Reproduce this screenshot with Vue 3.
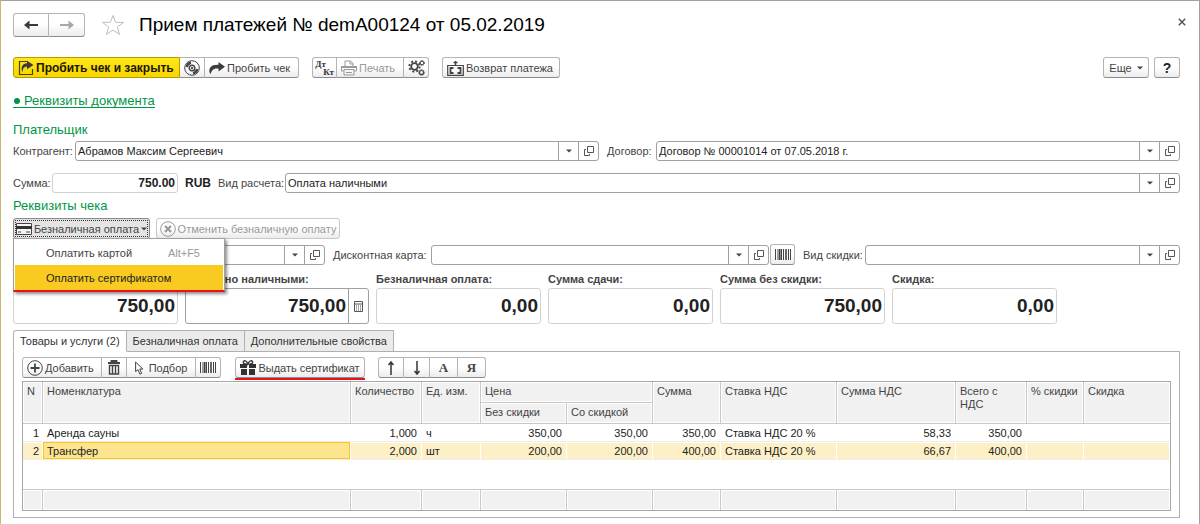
<script setup>
import { ref } from 'vue'

const contractor = ref('Абрамов Максим Сергеевич')
const contract = ref('Договор № 00001014 от 07.05.2018 г.')
const amount = ref('750.00')
const kind = ref('Оплата наличными')
const receipt = ref('')
const discountCard = ref('')
const discountKind = ref('')

const totals = [
  { id: 'due', label: '', hint: 'К оплате', value: '750,00' },
  { id: 'cash', label: 'Получено наличными:', value: '750,00', calc: true },
  { id: 'card', label: 'Безналичная оплата:', value: '0,00' },
  { id: 'change', label: 'Сумма сдачи:', value: '0,00' },
  { id: 'gross', label: 'Сумма без скидки:', value: '750,00' },
  { id: 'discount', label: 'Скидка:', value: '0,00' }
]

const rows = [
  { n: 1, name: 'Аренда сауны', qty: '1,000', unit: 'ч', price: '350,00', net: '350,00', sum: '350,00', rate: 'Ставка НДС 20 %', vat: '58,33', total: '350,00' },
  { n: 2, name: 'Трансфер', qty: '2,000', unit: 'шт', price: '200,00', net: '200,00', sum: '400,00', rate: 'Ставка НДС 20 %', vat: '66,67', total: '400,00' }
]
const selected = ref(2)
</script>

<template>
  <main class="window">
    <svg class="defs" width="0" height="0" aria-hidden="true">
      <symbol id="i-down" viewBox="0 0 6 4"><path d="M0 .5h6L3 3.5z" fill="#444" /></symbol>
      <symbol id="i-open" viewBox="0 0 10 10"><path d="M3.500 .5h6v6h-6zM2 3.500H.5v6h5V8" fill="none" stroke="#555" /></symbol>
      <symbol id="i-bars" viewBox="0 0 16 11"><path d="M.5 0v11M3 0v11M6.500 0v11M8.500 0v11M13.500 0v11M15.500 0v11" stroke="#444" /><path d="M4.800 0v11M11 0v11" stroke="#444" stroke-width="1.600" /></symbol>
      <symbol id="i-share" viewBox="0 0 16 12"><path d="M9.500 0 16 4.700 9.500 9.400V6.600C5 6.300 2.800 7.500 1.800 12 .2 11 0 8.500.7 6.500 2 3.300 5 2.600 9.500 2.700z" fill="#3c3c3c" /></symbol>
    </svg>

    <header class="head">
      <div class="group nav">
        <button class="btn" aria-label="Назад"><svg width="14" height="10" viewBox="0 0 14 10"><path d="M0 5 5.500 .5V4H14v2H5.500v3.500z" fill="#3a3a3a" /></svg></button>
        <button class="btn" aria-label="Вперед" disabled><svg width="14" height="10" viewBox="0 0 14 10"><path d="M14 5 8.500 .5V4H0v2h8.500v3.500z" fill="#a8a8a8" /></svg></button>
      </div>
      <button class="plain star" aria-label="В избранное">
        <svg width="24" height="22" viewBox="0 0 24 22"><path d="M12 1.500 14.600 8.300 22.500 8.400 16.300 13 18.600 20.500 12 16 5.400 20.500 7.700 13 1.500 8.400 9.400 8.300z" fill="none" stroke="#b9bfc8" /></svg>
      </button>
      <h1>Прием платежей № demA00124 от 05.02.2019</h1>
      <button class="plain close" aria-label="Закрыть"><svg width="8" height="8" viewBox="0 0 8 8"><path d="M.8.8l6.400 6.400M7.200.8.8 7.200" stroke="#555" stroke-width="1.500" /></svg></button>
    </header>

    <div class="bar commands">
      <div class="group">
        <button class="btn primary">
          <svg width="16" height="16" viewBox="0 0 16 16"><path d="M9 1.500H1.500v13h13V9" fill="none" stroke="#4a4200" stroke-width="1.200" /><path d="M9 .8 15.500 5 9 9.300V6.800C6 6.700 5 8 4.600 12 2.600 9 3.500 3.300 9 3.200z" fill="#3c3c3c" /></svg>Пробить чек и закрыть
        </button>
        <button class="btn icon" aria-label="Провести">
          <svg width="16" height="16" viewBox="0 0 16 16" fill="none" stroke="#444"><circle cx="8" cy="8" r="7.300" /><circle cx="8" cy="8" r="2.800" stroke-width="1.400" /><circle cx="8" cy="8" r=".8" fill="#444" /><path d="M2.800 7A5.200 5.200 0 0 1 7 2.800M13.200 9A5.200 5.200 0 0 1 9 13.200" stroke-width="2.400" /></svg>
        </button>
        <button class="btn share"><svg width="16" height="12"><use href="#i-share" /></svg>Пробить чек</button>
      </div>
      <div class="group second">
        <button class="btn icon dtkt" aria-label="Проводки"><span>Дт</span><span>Кт</span></button>
        <button class="btn print" disabled>
          <svg width="16" height="16" viewBox="0 0 16 16" fill="none" stroke="#999"><path d="M4 6V1h5.500L12 3.500V6M9 1v3h3" /><path d="M0 6h16v2H0z" fill="#999" stroke="none" /><path d="M.5 8v3H3M15.500 8v3H13M3 9.500h10v5.500H3zM5 12.500h6" /></svg>Печать
        </button>
        <button class="btn icon" aria-label="Настройки">
          <svg width="17" height="16" viewBox="0 0 17 16" fill="none" stroke="#444"><circle cx="6.500" cy="6.500" r="3.300" stroke-width="1.800" /><circle cx="6.500" cy="6.500" r="5.200" stroke-width="1.800" stroke-dasharray="2.040 2.040" /><circle cx="14" cy="3" r="1.800" /><circle cx="14" cy="3" r="2.500" stroke-dasharray="1 1" /><circle cx="13.500" cy="12.500" r="2" stroke-width="1.200" /><circle cx="13.500" cy="12.500" r="2.900" stroke-dasharray="1.100 1.100" /></svg>
        </button>
      </div>
      <div class="group third">
        <button class="btn refund">
          <svg width="17" height="16" viewBox="0 0 17 16" fill="none" stroke="#444"><path d="M8.500 5.500V1M6.500 2.500h4" stroke-width="1.500" /><path d="M.7 5.500h15.600v9.800H.7z" stroke-width="1.200" /><path d="M6.500 8H3.500v5h3M10.500 8h3v5h-3" stroke-width="1.800" /></svg>Возврат платежа
        </button>
      </div>
      <button class="btn single more">Еще<svg class="caret" width="6" height="4"><use href="#i-down" /></svg></button>
      <button class="btn single help" aria-label="Справка">?</button>
    </div>

    <a class="details" href="#details"><span class="dot"></span>Реквизиты документа</a>

    <h2 class="payer">Плательщик</h2>
    <div class="row parties">
      <label for="contractor">Контрагент:</label>
      <div class="field">
        <input id="contractor" v-model="contractor" type="text" />
        <button aria-label="Выбрать контрагента"><svg width="6" height="4"><use href="#i-down" /></svg></button>
        <button aria-label="Открыть контрагента"><svg width="10" height="10"><use href="#i-open" /></svg></button>
      </div>
      <label class="inner" for="contract">Договор:</label>
      <div class="field">
        <input id="contract" v-model="contract" type="text" />
        <button aria-label="Выбрать договор"><svg width="6" height="4"><use href="#i-down" /></svg></button>
        <button aria-label="Открыть договор"><svg width="10" height="10"><use href="#i-open" /></svg></button>
      </div>
    </div>

    <div class="row payment">
      <label for="amount">Сумма:</label>
      <div class="field light"><input id="amount" v-model="amount" class="amount" type="text" /></div>
      <strong class="currency">RUB</strong>
      <label for="kind">Вид расчета:</label>
      <div class="field">
        <input id="kind" v-model="kind" type="text" />
        <button aria-label="Выбрать вид расчета"><svg width="6" height="4"><use href="#i-down" /></svg></button>
        <button aria-label="Открыть вид расчета"><svg width="10" height="10"><use href="#i-open" /></svg></button>
      </div>
    </div>

    <h2 class="receipt">Реквизиты чека</h2>
    <div class="bar cashless">
      <div class="dropdown">
        <button class="btn single pressed" aria-haspopup="menu" aria-expanded="true">
          <svg width="16" height="12" viewBox="0 0 16 12"><path d="M.5.5h15v11H.5z" fill="#f4f4f4" stroke="#444" /><path d="M0 3h16v3H0z" fill="#333" /><path d="M2 9h3M10 9h4" stroke="#444" /></svg>Безналичная оплата<svg class="caret" width="6" height="4"><use href="#i-down" /></svg>
        </button>
        <div class="menu" role="menu">
          <button role="menuitem"><span>Оплатить картой</span><kbd>Alt+F5</kbd></button>
          <button role="menuitem" class="active"><span>Оплатить сертификатом</span></button>
        </div>
      </div>
      <button class="btn single cancel" disabled>
        <svg width="16" height="16" viewBox="0 0 16 16" fill="none" stroke="#999"><circle cx="8" cy="8" r="7.300" /><path d="M5 5l6 6M11 5l-6 6" stroke-width="2.200" /></svg>Отменить безналичную оплату
      </button>
    </div>

    <div class="row discounts">
      <div class="field">
        <input v-model="receipt" type="text" aria-label="Реквизит чека" />
        <button aria-label="Выбрать"><svg width="6" height="4"><use href="#i-down" /></svg></button>
        <button aria-label="Открыть"><svg width="10" height="10"><use href="#i-open" /></svg></button>
      </div>
      <label class="inner" for="dcard">Дисконтная карта:</label>
      <div class="field">
        <input id="dcard" v-model="discountCard" type="text" />
        <button aria-label="Выбрать карту"><svg width="6" height="4"><use href="#i-down" /></svg></button>
        <button aria-label="Открыть карту"><svg width="10" height="10"><use href="#i-open" /></svg></button>
      </div>
      <button class="btn single scan" aria-label="Сканировать карту"><svg width="16" height="11"><use href="#i-bars" /></svg></button>
      <label class="inner" for="dkind">Вид скидки:</label>
      <div class="field">
        <input id="dkind" v-model="discountKind" type="text" />
        <button aria-label="Выбрать вид скидки"><svg width="6" height="4"><use href="#i-down" /></svg></button>
        <button aria-label="Открыть вид скидки"><svg width="10" height="10"><use href="#i-open" /></svg></button>
      </div>
    </div>

    <div class="totals">
      <div v-for="t in totals" :key="t.id" class="total" :class="{ editable: t.calc }">
        <label :for="t.id">{{ t.label }}</label>
        <div class="field big" :class="{ light: !t.calc }">
          <input :id="t.id" type="text" :value="t.value" :readonly="!t.calc" :aria-label="t.hint" />
          <button v-if="t.calc" aria-label="Калькулятор">
            <svg width="9" height="11" viewBox="0 0 9 11"><path d="M.5.5h8v10h-8zM.5 3h8" fill="none" stroke="#555" /><path d="M2 5h1m1 0h1m1 0h1M2 7h1m1 0h1m1 0h1M2 9h1m1 0h1m1 0h1" stroke="#555" /></svg>
          </button>
        </div>
      </div>
    </div>

    <div class="tabs" role="tablist">
      <button role="tab" aria-selected="true">Товары и услуги (2)</button>
      <button role="tab" aria-selected="false">Безналичная оплата</button>
      <button role="tab" aria-selected="false">Дополнительные свойства</button>
    </div>
    <section class="panel" role="tabpanel">
      <div class="bar tools">
        <div class="group">
          <button class="btn add"><svg width="16" height="16" viewBox="0 0 16 16" fill="none" stroke="#444"><circle cx="8" cy="8" r="7.300" /><path d="M8 3.500v9M3.500 8h9" stroke-width="1.800" /></svg>Добавить</button>
          <button class="btn icon" aria-label="Удалить"><svg width="12" height="15" viewBox="0 0 12 15" fill="none" stroke="#444"><path d="M0 3h12M3.500 2.500V1h5v1.500" stroke-width="1.800" /><path d="M1.500 5.500h9V14h-9zM4.500 6v7.500M7.500 6v7.500" stroke-width="1.400" /></svg></button>
          <button class="btn pick"><svg width="9" height="14" viewBox="0 0 9 14"><path d="M.6 1v9.600l2.300-2 2 4.600 1.800-.8-2-4.400h3.200z" fill="#fff" stroke="#444" /></svg>Подбор</button>
          <button class="btn icon" aria-label="Штрихкод"><svg width="16" height="11"><use href="#i-bars" /></svg></button>
        </div>
        <div class="certificate">
          <button class="btn single"><svg width="16" height="15" viewBox="0 0 16 15"><path d="M7.500 4C5 4.500 2.500 3.500 3.500 1.600S7 1 7.800 4C9 .8 11.500 0 12.500 1.600S11 4.500 8.200 4" fill="none" stroke="#333" stroke-width="1.300" /><path d="M0 4h7v4H0zM9 4h7v4H9zM1 9h6v6H1zM9 9h6v6H9z" fill="#333" /></svg>Выдать сертификат</button>
        </div>
        <div class="group sort">
          <button class="btn" aria-label="Вверх"><svg width="6" height="14" viewBox="0 0 6 14"><path d="M3 14V2M.5 4 3 1l2.500 3" fill="none" stroke="#333" stroke-width="1.500" /></svg></button>
          <button class="btn" aria-label="Вниз"><svg width="6" height="14" viewBox="0 0 6 14"><path d="M3 0v12M.5 10 3 13l2.500-3" fill="none" stroke="#333" stroke-width="1.500" /></svg></button>
          <button class="btn letter">А</button>
          <button class="btn letter">Я</button>
        </div>
      </div>

      <table>
        <colgroup>
          <col class="c-n" /><col /><col class="c-qty" /><col class="c-unit" /><col class="c-price" /><col class="c-price" />
          <col class="c-sum" /><col class="c-rate" /><col class="c-vat" /><col class="c-total" /><col class="c-pct" /><col class="c-disc" />
        </colgroup>
        <thead>
          <tr>
            <th rowspan="2">N</th><th rowspan="2">Номенклатура</th><th rowspan="2">Количество</th><th rowspan="2">Ед. изм.</th>
            <th colspan="2">Цена</th><th rowspan="2">Сумма</th><th rowspan="2">Ставка НДС</th><th rowspan="2">Сумма НДС</th>
            <th rowspan="2">Всего с НДС</th><th rowspan="2">% скидки</th><th rowspan="2">Скидка</th>
          </tr>
          <tr><th>Без скидки</th><th>Со скидкой</th></tr>
        </thead>
        <tbody>
          <tr v-for="r in rows" :key="r.n" :class="{ selected: r.n === selected }" @click="selected = r.n">
            <td class="num">{{ r.n }}</td><td class="name">{{ r.name }}</td><td class="num">{{ r.qty }}</td><td>{{ r.unit }}</td>
            <td class="num">{{ r.price }}</td><td class="num">{{ r.net }}</td><td class="num">{{ r.sum }}</td><td>{{ r.rate }}</td>
            <td class="num">{{ r.vat }}</td><td class="num">{{ r.total }}</td><td></td><td></td>
          </tr>
          <tr class="space"><td colspan="12"></td></tr>
        </tbody>
        <tfoot>
          <tr><td v-for="i in 12" :key="i"></td></tr>
        </tfoot>
      </table>
    </section>
  </main>
</template>

<style>
body {
  margin: 0;
  background: #fff;
}
</style>

<style scoped>
* {
  box-sizing: border-box;
}
.window {
  min-height: 100vh;
  padding: 12px 19px 6px 12px;
  border: 1px solid #a0a0a0;
  border-left-color: #c9b874;
  border-bottom: 0;
  font: 11px/14px "Liberation Sans", Arial, sans-serif;
  color: #444;
  white-space: nowrap;
}
.defs {
  position: absolute;
}
button,
input {
  margin: 0;
  font: inherit;
  color: inherit;
}
svg {
  flex: none;
  display: block;
}
.plain {
  padding: 0;
  border: 0;
  background: none;
}
.head,
.bar,
.group {
  display: flex;
  align-items: center;
}
.head {
  height: 24px;
}
.btn {
  display: flex;
  align-items: center;
  justify-content: center;
  gap: 2px;
  height: 21px;
  padding: 0 4px;
  border: 1px solid #b4b4b4;
  border-bottom-color: #8c8c8c;
  border-left-width: 0;
  background: linear-gradient(#fff 45%, #ececec);
}
.btn:disabled {
  color: #999;
}
.group .btn:first-child,
.single {
  border-left-width: 1px;
}
.group .btn:first-child {
  border-radius: 3px 0 0 3px;
}
.group .btn:last-child {
  border-radius: 0 3px 3px 0;
}
.group .btn:only-child,
.single {
  border-radius: 3px;
}
.nav .btn {
  width: 36px;
  height: 24px;
}
.star {
  margin: 0 14px 0 16px;
}
h1 {
  flex: 1;
  margin: 0;
  font-size: 19px;
  line-height: 26px;
  font-weight: 400;
  color: #000;
}
.close {
  align-self: flex-start;
  padding: 5px 0;
  margin-right: -6px;
}
.commands {
  margin-top: 20px;
}
.btn.icon {
  width: 25px;
  padding: 0;
}
.btn.primary {
  width: 167px;
  justify-content: flex-start;
  border-color: #b59b00;
  background: linear-gradient(#ffe81a, #f7d500);
  font-size: 12px;
  font-weight: 700;
  color: #1c1800;
}
.share {
  width: 94px;
  justify-content: flex-start;
}
.second {
  margin-left: 13px;
}
.btn.dtkt {
  flex-direction: column;
  gap: 0;
  font: bold 9px/8px "Liberation Serif", "Times New Roman", serif;
  color: #333;
}
.dtkt span:first-child {
  padding-right: 8px;
}
.dtkt span:last-child {
  padding-left: 8px;
}
.print {
  width: 67px;
  justify-content: flex-start;
}
.third {
  margin-left: 13px;
}
.refund {
  width: 118px;
  justify-content: flex-start;
}
.more {
  width: 46px;
  margin-left: auto;
  gap: 5px;
}
.help {
  width: 26px;
  margin-left: 5px;
  font-size: 14px;
  font-weight: 700;
  color: #222;
}
.details {
  display: flex;
  align-items: center;
  width: max-content;
  margin-top: 16px;
  border-bottom: 1px solid #009646;
  font-size: 13px;
  line-height: 13px;
  color: #009646;
  text-decoration: none;
}
.dot {
  width: 6px;
  height: 6px;
  margin: 0 4px 0 1px;
  border-radius: 50%;
  background: #009646;
}
h2 {
  margin: 0;
  font-size: 13px;
  line-height: 16px;
  font-weight: 400;
  color: #009646;
}
.payer {
  margin-top: 14px;
}
.row {
  display: grid;
  align-items: center;
}
.parties {
  grid-template-columns: 62px 1fr 57px 1fr;
  margin-top: 3px;
}
.payment {
  grid-template-columns: 39px 126px 40px 67px 1fr;
  margin-top: 12px;
}
.discounts {
  grid-template-columns: 312fr 106px 338fr 26px 70px 315fr;
  margin-top: 5px;
}
.inner {
  padding-left: 8px;
}
.field {
  display: flex;
  min-width: 0;
  height: 20px;
  border: 1px solid #a0a0a0;
  border-radius: 3px;
  background: #fff;
}
.field input {
  flex: 1;
  min-width: 0;
  padding: 0 2px;
  border: 0;
  outline: 0;
  background: none;
  color: #222;
}
.field button {
  display: flex;
  align-items: center;
  justify-content: center;
  width: 20px;
  padding: 0;
  border: 0;
  border-left: 1px solid #a0a0a0;
  background: none;
}
.light {
  border-color: #d2d2d2;
}
.field .amount {
  font-size: 12px;
  font-weight: 700;
  text-align: right;
}
.currency {
  padding-left: 7px;
  font-size: 12px;
  color: #222;
}
.receipt {
  margin-top: 5px;
}
.cashless {
  gap: 6px;
  margin-top: 4px;
}
.dropdown {
  position: relative;
}
.pressed {
  width: 137px;
  padding: 0;
  background: #e4e4e4;
  border-color: #888;
  outline: 1px dotted #333;
  outline-offset: -3px;
}
.menu {
  position: absolute;
  z-index: 2;
  top: 20px;
  left: 0;
  width: 212px;
  padding: 1px 1px 0;
  border: 1px solid #a0a0a0;
  border-bottom: 2px solid #f0101a;
  background: #fff;
  box-shadow: 2px 2px 3px rgba(0, 0, 0, 0.45);
}
.menu button {
  display: flex;
  align-items: center;
  justify-content: space-between;
  width: 100%;
  height: 25px;
  padding: 0 23px 0 31px;
  border: 0;
  background: none;
}
.menu .active {
  background: #f9cb20;
  color: #222;
}
kbd {
  font: inherit;
  color: #999;
}
.cancel {
  width: 184px;
  border-color: #c8c8c8;
}
.scan {
  width: 25px;
  margin-left: 1px;
  padding: 0;
}
.totals {
  display: flex;
  gap: 7px;
  margin-top: 6px;
}
.total {
  width: 165px;
}
.total label {
  display: block;
  height: 16px;
  line-height: 16px;
  font-weight: 700;
}
.editable {
  width: 184px;
}
.big {
  height: 36px;
  margin-top: 1px;
}
.big input {
  font-size: 19px;
  font-weight: 700;
  text-align: right;
}
.tabs {
  display: flex;
  margin-top: 6px;
}
.tabs button {
  height: 22px;
  padding: 0 6px;
  border: 1px solid #b0b0b0;
  border-left-width: 0;
  background: #ebebeb;
  color: #333;
}
.tabs button:first-child {
  position: relative;
  border-left-width: 1px;
  border-bottom-color: #fff;
  border-radius: 3px 0 0 0;
  background: #fff;
}
.panel {
  margin-top: -1px;
  padding: 5px 8px 6px;
  border: 1px solid #b0b0b0;
  background: #fff;
}
.add {
  width: 80px;
  justify-content: flex-start;
}
.pick {
  width: 69px;
  gap: 5px;
}
.certificate {
  margin-left: 14px;
  border-bottom: 2px solid #f0101a;
  margin-bottom: -2px;
}
.certificate .btn {
  width: 130px;
}
.sort {
  margin-left: 13px;
}
.sort .btn {
  width: 26px;
}
.sort .letter {
  width: 28px;
  font: bold 13px/14px "Liberation Serif", "Times New Roman", serif;
}
table {
  width: 100%;
  margin-top: 3px;
  table-layout: fixed;
  border-collapse: separate;
  border-spacing: 0;
  border: 1px solid #a8a8a8;
  color: #222;
}
.c-n { width: 20px; }
.c-qty { width: 71px; }
.c-unit { width: 59px; }
.c-price { width: 86px; }
.c-sum { width: 68px; }
.c-rate { width: 116px; }
.c-vat { width: 119px; }
.c-total { width: 71px; }
.c-pct { width: 57px; }
.c-disc { width: 86px; }
th {
  height: 21px;
  padding: 3px 3px 2px 4px;
  border-right: 1px solid #c8c8c8;
  border-bottom: 1px solid #c8c8c8;
  background: #f1f1f1;
  box-shadow: inset 0 0 0 1px #fff;
  font-weight: 400;
  line-height: 13px;
  text-align: left;
  vertical-align: top;
  color: #444;
  white-space: normal;
}
td {
  height: 18px;
  padding: 0 4px;
  border-right: 1px solid #fff;
  border-bottom: 1px solid #ececec;
}
.num {
  text-align: right;
}
.selected td {
  background: #fdf0c6;
  box-shadow: inset 0 1px #fff;
}
.selected .name {
  background: #fde48e;
  box-shadow: inset 0 0 0 1px #fbc61c;
}
.space td {
  height: 30px;
  border-bottom-color: #c8c8c8;
}
tfoot td {
  height: 20px;
  border-right-color: #c8c8c8;
  border-bottom: 0;
  background: #f1f1f1;
  box-shadow: inset 0 0 0 1px #fff;
}
th:first-child[rowspan],
td:first-child {
  padding-right: 3px;
}
thead tr:first-child th:last-child,
tfoot td:last-child {
  border-right: 0;
}
</style>
